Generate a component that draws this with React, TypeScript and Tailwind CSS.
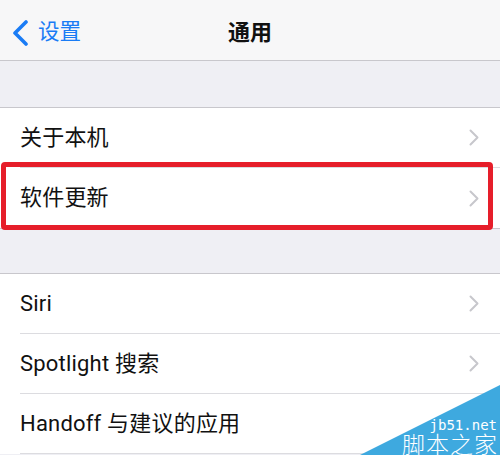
import React from "react";

const font = { fontFamily: 'Roboto, "Noto Sans CJK SC", sans-serif' };

function Chevron() {
  return (
    <svg width="10" height="17" viewBox="0 0 10 17" className="shrink-0">
      <path d="M1.5 1.5 L8.5 8.5 L1.5 15.5" fill="none" stroke="#c7c7cc" strokeWidth="2" strokeLinecap="round" strokeLinejoin="round" />
    </svg>
  );
}

function Row({ label, last, children }: { label: string; last?: boolean; children?: React.ReactNode }) {
  return (
    <div className="relative bg-white pl-5">
      <div className={`flex h-[60px] items-center justify-between pr-[21px] ${last ? "" : "border-b border-[#dcdce0]"}`}>
        <span className="text-[22px] leading-none tracking-[0.2px] text-[#111]">{label}</span>
        <Chevron />
      </div>
      {children}
    </div>
  );
}

export default function App() {
  return (
    <div className="relative h-[455px] w-[500px] overflow-hidden bg-[#efeff4]" style={font}>
      <div className="grid h-[61px] grid-cols-3 items-center border-b border-[#c8c7cc] bg-[#f7f7f8] pt-[5px]">
        <div className="flex items-center gap-[9px] pl-[12px]">
          <svg width="17" height="26" viewBox="0 0 17 26">
            <path d="M14 2 L3 13 L14 24" fill="none" stroke="#1a7cf5" strokeWidth="3.6" strokeLinecap="round" strokeLinejoin="round" />
          </svg>
          <span className="text-[21.5px] text-[#1a7cf5]">设置</span>
        </div>
        <div className="text-center text-[22px] font-semibold text-[#111]">通用</div>
        <div />
      </div>
      <div className="h-[47px] border-b border-[#c8c7cc]" />
      <div>
        <Row label="关于本机" />
        <Row label="软件更新" last>
          <div className="absolute left-[1px] right-[7px] top-[-6px] bottom-[-2px] rounded-[4px] border-[5px] border-[#e61e2a]" />
        </Row>
      </div>
      <div className="h-[46px] border-y border-[#c8c7cc]" />
      <div>
        <Row label="Siri" />
        <Row label="Spotlight 搜索" />
        <Row label="Handoff 与建议的应用" />
      </div>
      <div className="pointer-events-none absolute bottom-0 right-0 h-[70px] w-[140px]">
        <svg width="140" height="70" viewBox="0 0 140 70" className="absolute inset-0">
          <polygon points="0,70 140,0 140,70" fill="#3ea9df" />
        </svg>
        <div className="absolute right-[3px] top-[33px] text-[14px] leading-[14px] text-white" style={{ fontFamily: '"DejaVu Sans Mono", monospace' }}>jb51.net</div>
        <div className="absolute right-[2px] top-[47px] text-[23px] font-light leading-[23px] tracking-[1px] text-white" style={{ fontFamily: '"Noto Sans CJK SC", sans-serif' }}>脚本之家</div>
      </div>
    </div>
  );
}
